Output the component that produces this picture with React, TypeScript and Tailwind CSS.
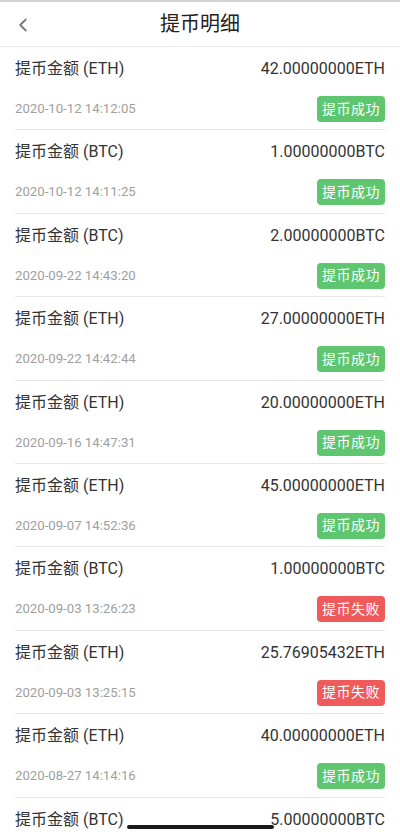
import { ChevronLeft } from "lucide-react";

type Rec = { coin: string; amount: string; time: string; ok: boolean };

const records: Rec[] = [
  { coin: "ETH", amount: "42.00000000", time: "2020-10-12 14:12:05", ok: true },
  { coin: "BTC", amount: "1.00000000", time: "2020-10-12 14:11:25", ok: true },
  { coin: "BTC", amount: "2.00000000", time: "2020-09-22 14:43:20", ok: true },
  { coin: "ETH", amount: "27.00000000", time: "2020-09-22 14:42:44", ok: true },
  { coin: "ETH", amount: "20.00000000", time: "2020-09-16 14:47:31", ok: true },
  { coin: "ETH", amount: "45.00000000", time: "2020-09-07 14:52:36", ok: true },
  { coin: "BTC", amount: "1.00000000", time: "2020-09-03 13:26:23", ok: false },
  { coin: "ETH", amount: "25.76905432", time: "2020-09-03 13:25:15", ok: false },
  { coin: "ETH", amount: "40.00000000", time: "2020-08-27 14:14:16", ok: true },
  { coin: "BTC", amount: "5.00000000", time: "2020-08-20 10:02:11", ok: true },
];

export default function App() {
  return (
    <div
      className="relative h-[835px] w-[400px] overflow-hidden bg-white"
      style={{ fontFamily: 'Roboto, "Noto Sans CJK SC", sans-serif' }}
    >
      <div className="h-[2px] bg-[#d4d4d4]" />
      {/* header */}
      <div className="relative flex h-[45px] items-center justify-center border-b border-[#ececec]">
        <button className="absolute left-[12px] top-[12px] text-[#7a7a7a]">
          <ChevronLeft size={22} strokeWidth={2} />
        </button>
        <h1 className="text-[20px] font-normal text-[#222]">提币明细</h1>
      </div>

      <div className="px-[15px]">
        {records.map((r, i) => (
          <div key={i} className="border-b border-[#e6e6e6] pt-[10px] pb-[7.4px]">
            <div className="flex h-[24px] items-center justify-between text-[16px] text-[#333]">
              <span>提币金额 ({r.coin})</span>
              <span>
                {r.amount}
                {r.coin}
              </span>
            </div>
            <div className="mt-[15px] flex h-[26px] items-center justify-between">
              <span className="text-[13.2px] text-[#a0a0a0]">{r.time}</span>
              <span
                className={`flex h-[26px] items-center rounded-[4px] px-[5px] text-[14px] tracking-[0.5px] text-white ${
                  r.ok ? "bg-[#5ec66f]" : "bg-[#ef5b5b]"
                }`}
              >
                {r.ok ? "提币成功" : "提币失败"}
              </span>
            </div>
          </div>
        ))}
      </div>

      {/* home indicator */}
      <div className="absolute bottom-[6px] left-[127px] h-[4px] w-[147px] rounded-full bg-[#1a1a1a]" />
    </div>
  );
}
